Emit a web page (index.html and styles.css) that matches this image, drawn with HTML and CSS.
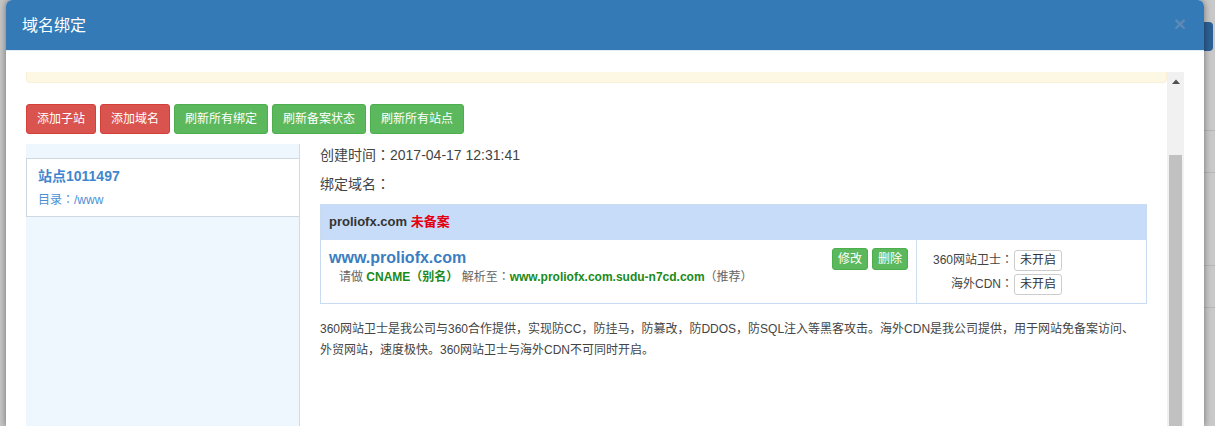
FILE: index.html
```html
<!DOCTYPE html>
<html lang="zh-CN">
<head>
<meta charset="utf-8">
<title>域名绑定</title>
<link rel="stylesheet" href="styles.css">
</head>
<body>
<div class="modal">
  <div class="modal-header">
    <h4 class="modal-title">域名绑定</h4>
    <span class="close">×</span>
  </div>
  <div class="modal-body">
    <div class="scroll">
      <div class="scroll-content">
        <div class="alert"></div>
        <div class="toolbar">
          <button class="btn btn-danger">添加子站</button>
          <button class="btn btn-danger">添加域名</button>
          <button class="btn btn-success">刷新所有绑定</button>
          <button class="btn btn-success">刷新备案状态</button>
          <button class="btn btn-success">刷新所有站点</button>
        </div>
        <div class="panel">
          <aside class="sidebar">
            <div class="site-item">
              <div class="site-name">站点1011497</div>
              <div class="site-dir">目录<span class="colon" lang="zh-Hant">：</span>/www</div>
            </div>
          </aside>
          <main class="detail">
            <p class="meta meta-first">创建时间<span class="colon" lang="zh-Hant">：</span>2017-04-17 12:31:41</p>
            <p class="meta meta-last">绑定域名<span class="colon" lang="zh-Hant">：</span></p>
            <div class="domain-box">
              <div class="domain-head">proliofx.com <span class="unrec">未备案</span></div>
              <div class="domain-row">
                <div class="domain-main">
                  <div class="domain-info">
                    <div class="host">www.proliofx.com</div>
                    <div class="cname">请做 <b>CNAME（别名）</b> 解析至<span class="colon" lang="zh-Hant">：</span><b>www.proliofx.com.sudu-n7cd.com</b>（推荐）</div>
                  </div>
                  <div class="ops">
                    <button class="btn btn-xs btn-success">修改</button>
                    <button class="btn btn-xs btn-success">删除</button>
                  </div>
                </div>
                <div class="domain-opts">
                  <span class="opt-label">360网站卫士<span class="colon" lang="zh-Hant">：</span></span><span><span class="tag">未开启</span></span>
                  <span class="opt-label">海外CDN<span class="colon" lang="zh-Hant">：</span></span><span><span class="tag">未开启</span></span>
                </div>
              </div>
            </div>
            <p class="note">360网站卫士是我公司与360合作提供，实现防CC，防挂马，防篡改，防DDOS，防SQL注入等黑客攻击。海外CDN是我公司提供，用于网站免备案访问、<br>外贸网站，速度极快。360网站卫士与海外CDN不可同时开启。</p>
          </main>
        </div>
      </div>
      <div class="scrollbar">
        <div class="sb-arrow"><svg width="8" height="5" viewBox="0 0 8 5"><polygon points="0,5 4,0.5 8,5" fill="#505050"/></svg></div>
        <div class="sb-thumb"></div>
      </div>
    </div>
  </div>
</div>
<div class="backdrop">
  <div class="bd-tab"></div>
  <div class="bd-box bd-box1"></div>
  <div class="bd-box bd-box2"></div>
</div>
</body>
</html>
```

FILE: styles.css
```css
* { box-sizing: border-box; }
html, body { margin: 0; height: 426px; overflow: hidden; }
body {
  display: flex;
  background: #c6c6c6;
  font-family: "Liberation Sans", "Noto Sans CJK SC", sans-serif;
  font-size: 12px;
  color: #333;
}
.modal {
  flex: none;
  width: 1198px;
  height: 426px;
  margin-left: 6px;
  background: #fff;
  border-radius: 6px 6px 0 0;
  box-shadow: 0 0 7px rgba(0, 0, 0, .45);
  display: flex;
  flex-direction: column;
  overflow: hidden;
  position: relative;
  z-index: 1;
}
.modal-header {
  flex: none;
  height: 51px;
  background: #337ab7;
  border-bottom: 1px solid #e3edf6;
  padding: 15px 18px 0 16px;
  display: flex;
  justify-content: space-between;
}
.modal-title {
  margin: 0;
  font-size: 16px;
  line-height: 21px;
  font-weight: normal;
  color: #fff;
}
.close {
  font-size: 21px;
  line-height: 20px;
  font-weight: bold;
  color: #5e89b4;
  margin-top: -1px;
}
.modal-body {
  flex: 1;
  min-height: 0;
  padding: 21px 20px 0;
}
.scroll { display: flex; height: 100%; }
.scroll-content {
  flex: 1;
  min-width: 0;
  display: flex;
  flex-direction: column;
}
.alert {
  flex: none;
  height: 11px;
  background: #fcf8e3;
  border: 1px solid #faf0d8;
  border-top: 0;
  border-radius: 0 0 4px 4px;
}
.toolbar { flex: none; display: flex; gap: 4px; margin-top: 21px; }
.btn {
  font-family: inherit;
  font-size: 12px;
  line-height: 18px;
  padding: 5px 10px;
  margin: 0;
  border: 1px solid transparent;
  border-radius: 3px;
  color: #fff;
}
.btn-danger { background: #d9534f; border-color: #d43f3a; }
.btn-success { background: #5cb85c; border-color: #4cae4c; }
.btn-xs { padding: 1px 5px; }
.panel { flex: 1; min-height: 0; display: flex; margin-top: 10px; }
.sidebar {
  flex: none;
  width: 274px;
  background: #eef6fe;
  border-right: 1px solid #cfdbe7;
  padding-top: 14px;
}
.site-item {
  background: #fff;
  border: 1px solid #cfd8e2;
  border-right: 0;
  padding: 7px 11px 6px;
}
.site-name { font-size: 14px; line-height: 20px; font-weight: bold; color: #3f86cf; }
.site-dir { font-size: 12px; line-height: 20px; margin-top: 4px; color: #4a8fd6; }
.detail { flex: 1; min-width: 0; padding: 0 20px; }
.meta { margin: 0 0 9px; font-size: 14px; line-height: 20px; color: #444; }
.meta-first { margin-top: 1px; }
.meta-last { margin-bottom: 10px; }
.domain-box { border: 1px solid #c8dbf2; }
.domain-head {
  height: 35px;
  line-height: 34px;
  background: #c6dcf8;
  padding: 0 8px;
  font-size: 13px;
  font-weight: bold;
  color: #333;
}
.unrec { color: #e4000f; }
.domain-row { display: flex; }
.domain-main {
  flex: 1;
  display: flex;
  justify-content: space-between;
  align-items: flex-start;
  padding: 8px;
  border-right: 1px solid #d0deef;
}
.host { font-size: 16px; line-height: 20px; font-weight: bold; color: #3a7ec1; }
.cname { font-size: 12px; line-height: 18px; color: #666; padding-left: 10px; }
.cname b { color: #1a8a1a; }
.ops { display: flex; gap: 4px; }
.domain-opts {
  flex: none;
  width: 229px;
  padding: 8px 0 7px 16px;
  display: grid;
  grid-template-columns: auto auto;
  grid-auto-rows: 24px;
  justify-content: start;
  align-items: center;
}
.opt-label { text-align: right; color: #444; line-height: 24px; white-space: nowrap; }
.tag {
  display: inline-block;
  vertical-align: middle;
  line-height: 19px;
  padding: 0 5px;
  margin-left: 1px;
  border: 1px solid #ccc;
  border-radius: 3px;
  background: #fff;
  color: #333;
}
.note { margin: 15px 0 0; font-size: 12px; line-height: 21px; color: #444; }
.scrollbar {
  flex: none;
  width: 17px;
  background: #f1f1f1;
  display: flex;
  flex-direction: column;
}
.sb-arrow {
  height: 17px;
  display: flex;
  align-items: center;
  justify-content: center;
  padding-top: 1px;
}
.sb-arrow svg { display: block; }
.sb-thumb { flex: 1; margin: 66px 2px 0; background: #c1c1c1; }
.backdrop {
  flex: 1;
  display: flex;
  flex-direction: column;
  background: #c9c9c9;
}
.bd-tab {
  margin-top: 22px;
  height: 29px;
  margin-right: 2px;
  background: #2c6195;
  border-radius: 0 4px 4px 0;
}
.bd-box { height: 43px; border-top: 1px solid #b6b6b6; border-bottom: 1px solid #b6b6b6; }
.bd-box1 { margin-top: 79px; }
.bd-box2 { margin-top: 92px; }
```
